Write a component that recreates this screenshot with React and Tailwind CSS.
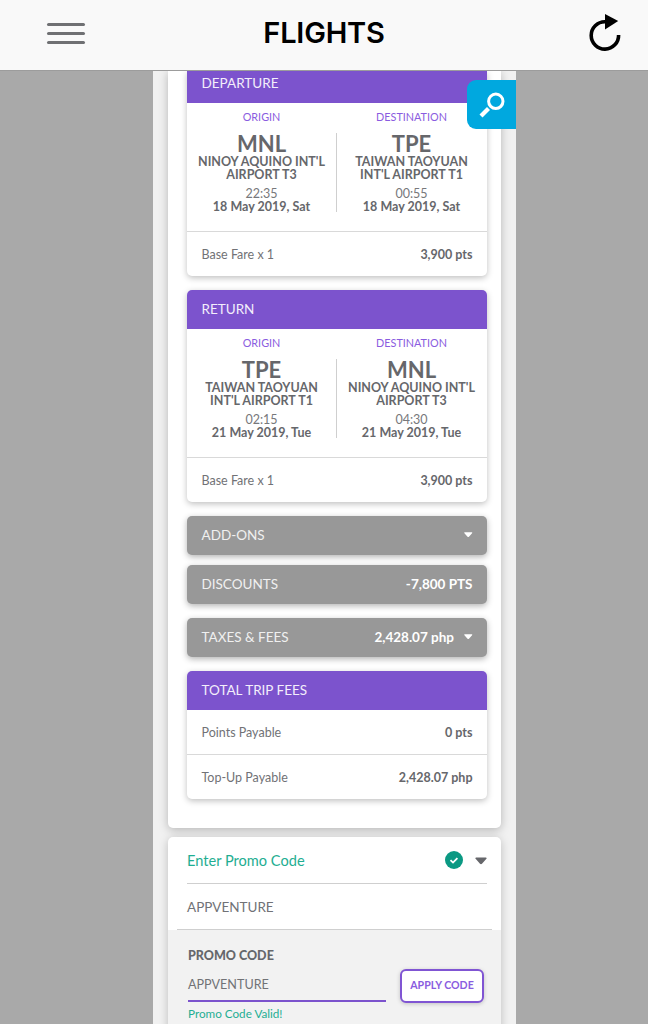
import clsx from 'clsx';

const FLIGHTS = [
  {
    title: 'DEPARTURE',
    clipped: true,
    stops: [
      { label: 'ORIGIN', code: 'MNL', airport: ["NINOY AQUINO INT'L", 'AIRPORT T3'], time: '22:35', date: '18 May 2019, Sat' },
      { label: 'DESTINATION', code: 'TPE', airport: ['TAIWAN TAOYUAN', "INT'L AIRPORT T1"], time: '00:55', date: '18 May 2019, Sat' },
    ],
    fare: '3,900 pts',
  },
  {
    title: 'RETURN',
    stops: [
      { label: 'ORIGIN', code: 'TPE', airport: ['TAIWAN TAOYUAN', "INT'L AIRPORT T1"], time: '02:15', date: '21 May 2019, Tue' },
      { label: 'DESTINATION', code: 'MNL', airport: ["NINOY AQUINO INT'L", 'AIRPORT T3'], time: '04:30', date: '21 May 2019, Tue' },
    ],
    fare: '3,900 pts',
  },
];

function Caret({ className }) {
  return (
    <svg viewBox="0 0 12 8" preserveAspectRatio="none" className={className} fill="currentColor">
      <path d="M1.2 0.5h9.6c.9 0 1.1.8.6 1.3L7 6.8c-.6.6-1.4.6-2 0L.6 1.8C.1 1.3.3.5 1.2.5z" />
    </svg>
  );
}

function TopBar() {
  return (
    <header className="flex h-[71px] shrink-0 items-center border-b border-[#9c9c9c] bg-[#f9f9f9] pr-[26px] pl-[47px]">
      <button aria-label="Menu" className="flex w-[38px] flex-col gap-[6px] pb-[4px]">
        <span className="h-[3px] rounded-full bg-[#6f7073]" />
        <span className="h-[3px] rounded-full bg-[#6f7073]" />
        <span className="h-[3px] rounded-full bg-[#6f7073]" />
      </button>
      <h1 className="flex-1 pr-[25px] pb-[6px] text-center font-[Inter,sans-serif] text-[29px] leading-none font-semibold tracking-[-0.2px] text-black">FLIGHTS</h1>
      <button aria-label="Reload" className="pb-[2px]">
        <svg viewBox="0 0 34 40" className="h-[40px] w-[34px]">
          <path d="M17 7.7A13.7 13.7 0 1 0 30.6 21" fill="none" stroke="#000" strokeWidth="3.6" />
          <path d="M17 0l13.2 7L17 15.6z" />
        </svg>
      </button>
    </header>
  );
}

function CardTitle({ children, clipped }) {
  return (
    <div
      className={clsx(
        'flex items-center bg-[#7c53cd] px-[14.5px] text-[13.5px] text-[#f3eefb]',
        clipped ? 'h-[32px] pb-[7px]' : 'h-[39px] rounded-t-[5px]'
      )}
    >
      {children}
    </div>
  );
}

function Stop({ stop }) {
  return (
    <div className="flex w-[149px] flex-col items-center text-center text-[12.5px] leading-[12.5px] text-[#66676b]">
      <p className="text-[10.8px] leading-[14px] text-[#8a5ce0]">{stop.label}</p>
      <p className="mt-[8px] text-[22px] leading-[24px] font-bold">{stop.code}</p>
      <p className="font-bold whitespace-nowrap">{stop.airport[0]}<br />{stop.airport[1]}</p>
      <p className="mt-[7px] text-[#77787b]">{stop.time}</p>
      <p className="font-bold">{stop.date}</p>
    </div>
  );
}

function AmountRow({ label, amount }) {
  return (
    <div className="flex h-[44px] items-center justify-between px-[14.5px] pt-[2px] text-[12.5px] text-[#717276]">
      <span>{label}</span>
      <span className="font-bold text-[#66676b]">{amount}</span>
    </div>
  );
}

function FlightCard({ flight }) {
  return (
    <section className={clsx('rounded-b-[5px] bg-white shadow-[0_2px_6px_rgba(0,0,0,0.25)]', !flight.clipped && 'mt-[14px] rounded-t-[5px]')}>
      <CardTitle clipped={flight.clipped}>{flight.title}</CardTitle>
      <div className="flex h-[129px] border-b border-[#d9d9d9] pt-[7px]">
        <Stop stop={flight.stops[0]} />
        <div className="mt-[23px] h-[79px] w-px bg-[#cfcfcf]" />
        <Stop stop={flight.stops[1]} />
      </div>
      <AmountRow label="Base Fare x 1" amount={flight.fare} />
    </section>
  );
}

function GrayRow({ label, amount, caret, className }) {
  return (
    <div className={clsx('flex h-[39px] items-center rounded-[5px] bg-[#989898] px-[14.5px] text-[13.5px] text-[#f0f0f0] shadow-[0_2px_6px_rgba(0,0,0,0.3)]', className)}>
      <span className="flex-1">{label}</span>
      {amount && <span className="font-bold text-white">{amount}</span>}
      {caret && <Caret className="mb-px ml-[10px] h-[5.5px] w-[8.5px] text-white" />}
    </div>
  );
}

function PromoPanel() {
  return (
    <section className="mt-[9px] h-[200px] rounded-t-[5px] bg-white shadow-[0_2px_10px_rgba(0,0,0,0.22)]">
      <div className="mr-[14px] ml-[19px] flex h-[47px] items-center border-b border-[#cfcfcf]">
        <h2 className="flex-1 pt-px text-[14.6px] text-[#1fae92]">Enter Promo Code</h2>
        <svg viewBox="0 0 18 18" className="h-[18px] w-[18px]">
          <circle cx="9" cy="9" r="9" fill="#0b9983" />
          <path d="M5.5 9.2l2.5 2.4 4.4-4.5" fill="none" stroke="#fff" strokeWidth="1.8" />
        </svg>
        <Caret className="mt-px ml-[12px] h-[8px] w-[12px] text-[#66676b]" />
      </div>
      <div className="mx-[9px] flex h-[46px] items-center border-b border-[#cfcfcf] px-[10px] pt-[2px] text-[13.5px] text-[#717276]">APPVENTURE</div>
      <div className="flex h-[100px] justify-between bg-[#f2f2f2] pr-[17px] pl-[20px]">
        <div className="w-[198px] pt-[17px]">
          <p className="text-[12.5px] leading-[18px] font-black text-[#66676b]">PROMO CODE</p>
          <div className="flex h-[37px] items-center border-b-2 border-[#7c53cd] pt-[6px] text-[12.6px] text-[#717276]">APPVENTURE</div>
          <p className="pt-[3px] text-[11.7px] leading-[16px] text-[#1fae92]">Promo Code Valid!</p>
        </div>
        <button className="mt-[39px] h-[34px] w-[84px] rounded-[6px] border-2 border-[#8055d3] bg-white text-[10.6px] font-bold whitespace-nowrap text-[#8a5ce0] shadow-[0_1px_4px_rgba(0,0,0,0.2)]">APPLY CODE</button>
      </div>
    </section>
  );
}

export default function App() {
  return (
    <div className="relative flex h-[1024px] w-[648px] flex-col overflow-hidden bg-[#a9a9a9] font-[Lato,sans-serif]">
      <TopBar />
      <main className="ml-[153px] min-h-0 w-[363px] flex-1 overflow-hidden bg-[#f1f1f1] pr-[15px] pl-[15px]">
        <div className="h-[757px] rounded-b-[5px] bg-white pr-[14px] pl-[19px] shadow-[0_2px_10px_rgba(0,0,0,0.25)]">
          {FLIGHTS.map((flight) => (
            <FlightCard key={flight.title} flight={flight} />
          ))}
          <GrayRow label="ADD-ONS" caret className="mt-[14px]" />
          <GrayRow label="DISCOUNTS" amount="-7,800 PTS" className="mt-[10px]" />
          <GrayRow label="TAXES & FEES" amount="2,428.07 php" caret className="mt-[14px]" />
          <section className="mt-[14px] rounded-[5px] bg-white shadow-[0_2px_6px_rgba(0,0,0,0.25)]">
            <CardTitle>TOTAL TRIP FEES</CardTitle>
            <AmountRow label="Points Payable" amount="0 pts" />
            <div className="border-t border-[#d9d9d9]">
              <AmountRow label="Top-Up Payable" amount="2,428.07 php" />
            </div>
          </section>
        </div>
        <PromoPanel />
      </main>
      <button aria-label="Search" className="absolute top-[80px] left-[467px] flex h-[49px] w-[49px] items-center justify-center rounded-l-[9px] bg-[#00a8df]">
        <svg viewBox="0 0 26 26" className="h-[26px] w-[26px]" fill="none" stroke="#fff">
          <circle cx="16.8" cy="9.3" r="7.2" strokeWidth="3" />
          <path d="M9.5 16.5L2 24" strokeWidth="4.2" />
        </svg>
      </button>
    </div>
  );
}
